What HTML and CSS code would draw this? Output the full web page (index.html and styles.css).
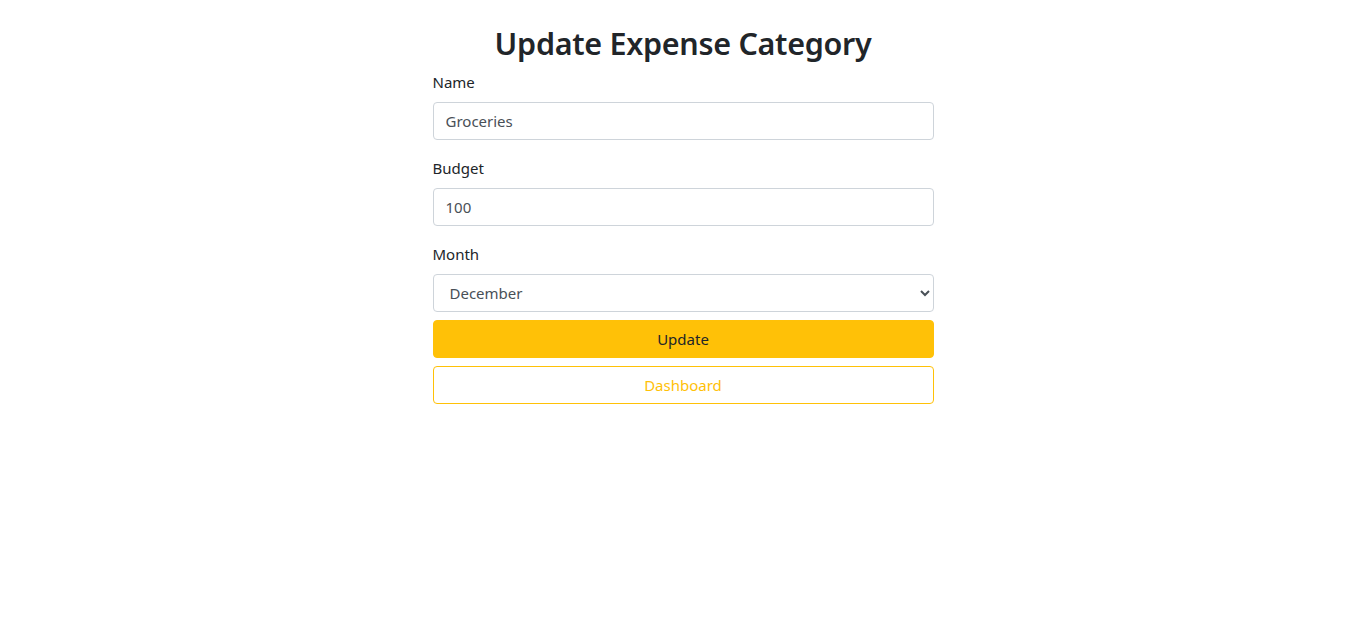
FILE: index.html
```html
<!DOCTYPE html>
<html lang="en">
<head>
    <meta charset="UTF-8">
    <meta name="viewport" content="width=device-width, initial-scale=1.0">
    <title>Update Expense Category</title>
    <link rel="stylesheet" href="styles.css">
</head>
<body>
    <div class="container">
        <h2>Update Expense Category</h2>
        <form>
            <div class="form-group">
                <label for="name">Name</label>
                <input type="text" id="name" class="form-control" value="Groceries">
            </div>
            <div class="form-group">
                <label for="budget">Budget</label>
                <input type="number" id="budget" class="form-control" value="100">
            </div>
            <div class="form-group">
                <label for="month">Month</label>
                <select id="month" class="form-control">
                    <option>January</option>
                    <option>February</option>
                    <option>March</option>
                    <option>April</option>
                    <option>May</option>
                    <option>June</option>
                    <option>July</option>
                    <option>August</option>
                    <option>September</option>
                    <option>October</option>
                    <option>November</option>
                    <option selected>December</option>
                </select>
            </div>
            <button type="button" class="btn btn-warning">Update</button>
            <button type="button" class="btn btn-outline-warning">Dashboard</button>
        </form>
    </div>
</body>
</html>
```

FILE: styles.css
```css
body {
    margin: 0;
    font-family: 'Noto Sans', 'Open Sans', sans-serif;
    font-size: 15px;
    line-height: 24px;
    color: #212529;
    background: #fff;
}
.container {
    width: 501px;
    margin: 0 auto;
    padding-top: 24px;
}
h2 {
    margin: 0 0 8px;
    font-size: 30.5px;
    font-weight: 600;
    line-height: 38px;
    text-align: center;
    letter-spacing: -0.3px;
}
.form-group {
    margin-bottom: 16px;
}
.form-group:last-of-type {
    margin-bottom: 8px;
}
label {
    display: block;
    margin-bottom: 8px;
}
.form-control {
    display: block;
    box-sizing: border-box;
    width: 100%;
    height: 38px;
    padding: 6px 12px;
    font-family: inherit;
    font-size: 15px;
    color: #495057;
    background: #fff;
    border: 1px solid #ced4da;
    border-radius: 4px;
    outline: none;
}
input[type=number]::-webkit-inner-spin-button {
    -webkit-appearance: none;
}
.btn {
    display: block;
    box-sizing: border-box;
    width: 100%;
    height: 38px;
    margin-bottom: 8px;
    font-family: inherit;
    font-size: 15px;
    border-radius: 4px;
    cursor: pointer;
}
.btn-warning {
    background: #ffc107;
    border: 1px solid #ffc107;
    color: #212529;
}
.btn-outline-warning {
    background: #fff;
    border: 1px solid #ffc107;
    color: #ffc107;
}
```
